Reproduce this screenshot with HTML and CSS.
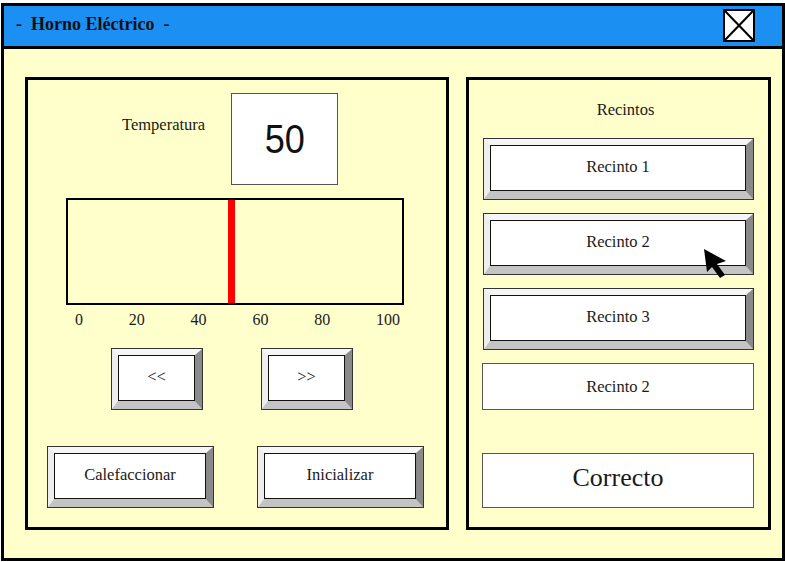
FILE: index.html
```html
<!DOCTYPE html>
<html lang="es">
<head>
<meta charset="utf-8">
<title>Horno Eléctrico</title>
<link rel="stylesheet" href="styles.css">
</head>
<body>
<div class="window">
  <div class="titlebar">
    <span class="title">-&nbsp; Horno Eléctrico &nbsp;-</span>
    <span class="close">
      <svg width="32" height="33" viewBox="0 0 32 33"><rect x="1" y="1" width="30" height="31" fill="#fff" stroke="#000" stroke-width="2"/><line x1="2" y1="2" x2="30" y2="31" stroke="#000" stroke-width="2"/><line x1="30" y1="2" x2="2" y2="31" stroke="#000" stroke-width="2"/></svg>
    </span>
  </div>
  <div class="content">
    <div class="panel left">
      <div class="temp-row">
        <div class="temp-label">Temperatura</div>
        <div class="temp-box"><span class="temp-value">50</span></div>
      </div>
      <div class="slider">
        <div class="marker" style="left:160px"></div>
      </div>
      <div class="scale">
        <span>0</span><span>20</span><span>40</span><span>60</span><span>80</span><span>100</span>
      </div>
      <div class="arrow-row">
        <div class="bevel small"><span class="face">&lt;&lt;</span></div>
        <div class="bevel small"><span class="face">&gt;&gt;</span></div>
      </div>
      <div class="action-row">
        <div class="bevel wide"><span class="face">Calefaccionar</span></div>
        <div class="bevel wide"><span class="face">Inicializar</span></div>
      </div>
    </div>
    <div class="panel right">
      <div class="rec-label">Recintos</div>
      <div class="bevel rec"><span class="face">Recinto 1</span></div>
      <div class="bevel rec"><span class="face">Recinto 2</span></div>
      <div class="bevel rec"><span class="face">Recinto 3</span></div>
      <div class="plain sel">Recinto 2</div>
      <div class="plain ok">Correcto</div>
    </div>
  </div>
  <svg class="cursor" width="30" height="34" viewBox="0 0 30 34"><polygon points="2,1 5,24 10,19 18,30 23,27 15,16 24,13" fill="#000"/></svg>
</div>
</body>
</html>
```
FILE: styles.css
```css
html, body {
  margin: 0;
  padding: 0;
  background: #ffffff;
}
body {
  font-family: "Liberation Serif", "Times New Roman", serif;
  color: #1a1a1a;
  font-size: 16.5px;
}
.window {
  position: relative;
  box-sizing: border-box;
  margin: 3px 0 0 1px;
  width: 784px;
  height: 558px;
  border: 3px solid #000;
  background: #ffffcc;
  display: flex;
  flex-direction: column;
}
.titlebar {
  height: 40px;
  background: #1c8ff2;
  border-bottom: 3px solid #000;
  display: flex;
  align-items: center;
  justify-content: space-between;
  padding: 0 27px 0 12px;
}
.title {
  font-weight: bold;
  font-size: 18px;
  color: #111;
  margin-top: -4px;
}
.close {
  display: flex;
  margin-top: -2px;
}
.content {
  flex: 1;
  display: flex;
  gap: 17px;
  padding: 28px 11px 28px 21px;
}
.panel {
  box-sizing: border-box;
  border: 3px solid #000;
  height: 453px;
}
.left {
  width: 424px;
}
.right {
  width: 305px;
}
.temp-row {
  display: flex;
  margin-top: 13px;
}
.temp-label {
  box-sizing: border-box;
  width: 203px;
  padding-left: 94px;
  padding-top: 22px;
  line-height: 20px;
}
.temp-box {
  box-sizing: border-box;
  width: 107px;
  height: 92px;
  background: #fff;
  border: 1px solid #555;
  display: flex;
  align-items: center;
  justify-content: center;
}
.temp-value {
  font-family: "Liberation Sans", Arial, sans-serif;
  font-size: 41px;
  display: inline-block;
  transform: scaleX(0.88);
  color: #111;
}
.slider {
  position: relative;
  box-sizing: border-box;
  margin: 13px 0 0 38px;
  width: 338px;
  height: 107px;
  border: 2px solid #000;
}
.marker {
  position: absolute;
  top: 0;
  bottom: 0;
  width: 7px;
  background: #ff0000;
}
.scale {
  display: flex;
  justify-content: space-between;
  margin: 5px 0 0 47px;
  width: 325px;
  line-height: 20px;
  font-size: 16px;
}
.arrow-row {
  display: flex;
  gap: 58px;
  margin: 18px 0 0 83px;
}
.action-row {
  display: flex;
  gap: 43px;
  margin: 36px 0 0 19px;
}
.bevel {
  box-sizing: border-box;
  border: 1px solid #333;
  height: 62px;
  display: flex;
}
.bevel .face {
  flex: 1;
  display: flex;
  align-items: center;
  justify-content: center;
  padding-bottom: 3px;
  background: #fff;
  border-style: solid;
  border-width: 6px 7px 8px 6px;
  border-color: #f6f6f6 #8a8a8a #c4c4c4 #eeeeee;
  box-shadow: inset 0 0 0 1px #111;
}
.small {
  width: 92px;
}
.wide {
  width: 167px;
}
.rec-label {
  margin-top: 20px;
  line-height: 20px;
  text-align: center;
  padding-left: 14px;
}
.rec {
  width: 271px;
  margin: 18px 0 0 14px;
}
.rec + .rec {
  margin-top: 13px;
}
.plain {
  box-sizing: border-box;
  width: 272px;
  margin-left: 13px;
  background: #fff;
  border: 1px solid #555;
  display: flex;
  align-items: center;
  justify-content: center;
}
.sel {
  height: 47px;
  margin-top: 13px;
}
.ok {
  height: 55px;
  margin-top: 43px;
  font-size: 26px;
  padding-bottom: 5px;
}
.cursor {
  position: absolute;
  left: 698px;
  top: 242px;
}
```
